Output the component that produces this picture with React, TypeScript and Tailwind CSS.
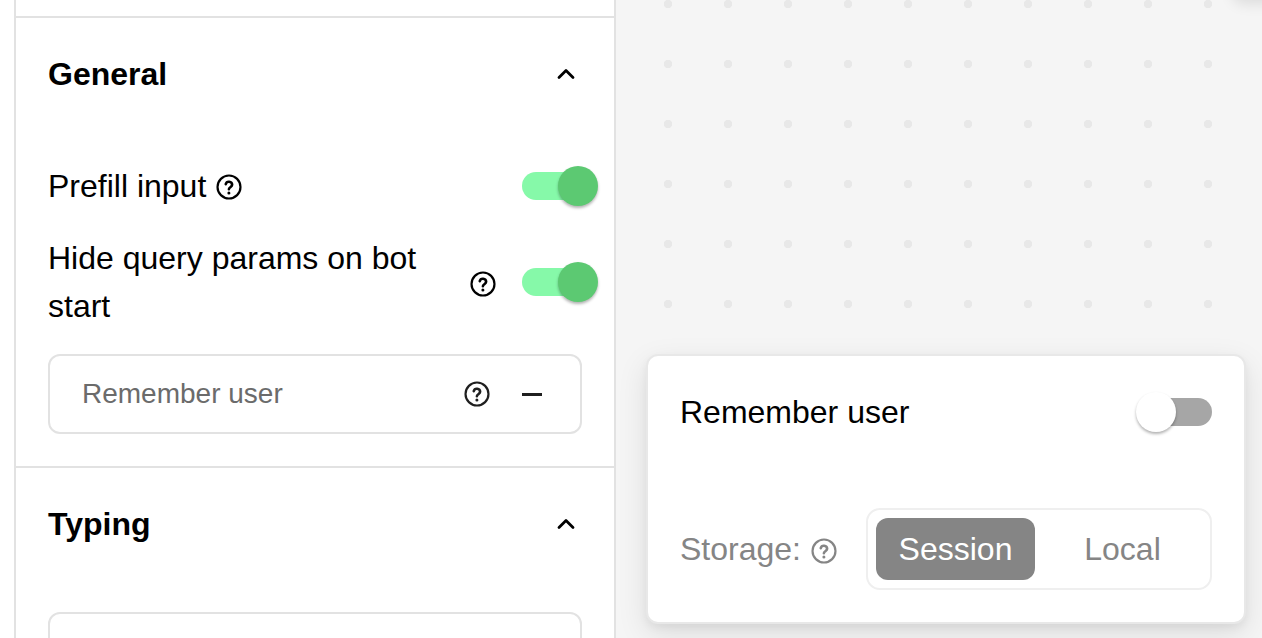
import { ChevronUp } from "lucide-react";

const Help = ({ className }: { className?: string }) => (
  <svg viewBox="0 0 24 24" fill="none" className={className}>
    <circle cx="12" cy="12" r="10.6" stroke="currentColor" strokeWidth="2" />
    <path
      d="M9 9.4a3 3 0 0 1 5.9.6c0 2-3 2.4-3 4"
      stroke="currentColor"
      strokeWidth="2.4"
      strokeLinecap="round"
    />
    <circle cx="11.9" cy="17.6" r="1.4" fill="currentColor" />
  </svg>
);

const Toggle = ({ on }: { on?: boolean }) => (
  <div
    className={`relative h-[28px] w-[60px] shrink-0 rounded-full ${on ? "bg-[#86f9a9]" : "bg-[#a6a6a6]"}`}
  >
    <div
      className={`absolute top-[-6px] h-[40px] w-[40px] rounded-full shadow-[0_2px_3px_rgba(0,0,0,0.3)] ${on ? "right-[-16px] bg-[#5cc972]" : "left-[-16px] bg-white"}`}
    />
  </div>
);

const SectionHeader = ({ title }: { title: string }) => (
  <div className="flex items-center justify-between">
    <h2 className="text-[32px] leading-[48px] font-bold text-black">{title}</h2>
    <ChevronUp className="mr-[2px] h-[28px] w-[28px] text-black" strokeWidth={2.4} />
  </div>
);

export default function App() {
  return (
    <div className="flex h-[638px] w-[1262px] overflow-hidden bg-white font-['Liberation_Sans',sans-serif] text-black">
      <div className="w-[14px] shrink-0 bg-white" />
      <aside className="w-[602px] shrink-0 border-x-2 border-[#e2e2e2] bg-white">
        <div className="h-[18px] border-b-2 border-[#e2e2e2]" />
        <section className="border-b-2 border-[#e2e2e2] px-[32px] pt-[32px] pb-[32px]">
          <SectionHeader title="General" />
          <div className="mt-[64px] flex h-[48px] items-center justify-between text-[32px]">
            <div className="flex items-center gap-[10px]">
              <span className="leading-[48px]">Prefill input</span>
              <Help className="mt-[2px] h-[26px] w-[26px]" />
            </div>
            <Toggle on />
          </div>
          <div className="mt-[24px] flex items-center justify-between text-[32px] leading-[48px]">
            <span className="w-[400px]">Hide query params on bot start</span>
            <div className="flex items-center gap-[26px]">
              <Help className="mt-[4px] h-[26px] w-[26px]" />
              <Toggle on />
            </div>
          </div>
          <div className="mt-[24px] flex h-[80px] items-center justify-between rounded-[12px] border-2 border-[#e2e2e2] pr-[38px] pl-[32px]">
            <span className="text-[28px] text-[#6b6b6b]">Remember user</span>
            <div className="flex items-center gap-[32px]">
              <Help className="h-[26px] w-[26px] text-[#1f1f1f]" />
              <div className="h-[3px] w-[20px] bg-[#1f1f1f]" />
            </div>
          </div>
        </section>
        <section className="px-[32px] pt-[32px]">
          <SectionHeader title="Typing" />
          <div className="mt-[64px] h-[80px] rounded-[12px] border-2 border-[#e2e2e2]" />
        </section>
      </aside>
      <main className="relative flex-1 bg-[#f5f5f5] bg-[radial-gradient(#e8e8e8_4px,transparent_4.5px)] bg-[length:60px_60px] bg-[position:22px_-26px] pt-[354px] pr-[16px] pl-[30px]">
        <div className="absolute top-[-40px] right-[-60px] h-[40px] w-[90px] rounded-[12px] shadow-[0_4px_14px_rgba(0,0,0,0.1)]" />
        <div className="h-[270px] rounded-[12px] border-2 border-[#e8e8e8] bg-white pt-[20px] pr-[32px] pl-[32px] shadow-[0_4px_8px_rgba(0,0,0,0.05),0_10px_30px_rgba(0,0,0,0.1)]">
          <div className="flex h-[72px] items-center justify-between text-[32px]">
            <span>Remember user</span>
            <Toggle />
          </div>
          <div className="mt-[60px] flex items-center justify-between text-[32px] text-[#858585]">
            <div className="flex items-center gap-[10px]">
              <span>Storage:</span>
              <Help className="mt-[4px] h-[26px] w-[26px]" />
            </div>
            <div className="flex h-[82px] w-[346px] items-center rounded-[14px] border-2 border-[#efefef] pl-[8px]">
              <div className="flex h-[62px] w-[159px] items-center justify-center rounded-[12px] bg-[#858585] text-white">
                Session
              </div>
              <div className="flex-1 text-center">Local</div>
            </div>
          </div>
        </div>
      </main>
    </div>
  );
}
